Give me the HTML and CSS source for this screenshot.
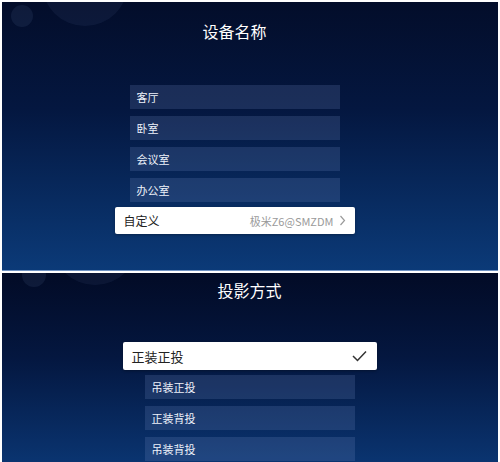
FILE: index.html
```html
<!DOCTYPE html>
<html lang="zh-CN">
<head>
  <meta charset="UTF-8" />
  <meta name="viewport" content="width=device-width, initial-scale=1.0"/>
  <title>设备设置</title>
  <link rel="stylesheet" href="styles.css">
</head>
<body>

  <div class="screen screen-name">
    <h2 class="title">设备名称</h2>
    <div class="list">
      <div class="item">客厅</div>
      <div class="item">卧室</div>
      <div class="item">会议室</div>
      <div class="item">办公室</div>
      <div class="item active">
        <span>自定义</span>
        <span class="value">极米Z6@SMZDM
          <svg class="chevron" width="7" height="11" viewBox="0 0 7 11"><polyline points="1.5,1 5.5,5.5 1.5,10" fill="none" stroke="#9a9a9a" stroke-width="1.2"/></svg>
        </span>
      </div>
    </div>
  </div>

  <div class="divider"></div>

  <div class="screen screen-mode">
    <h2 class="title">投影方式</h2>
    <div class="list">
      <div class="item active">
        <span>正装正投</span>
        <svg class="check" width="15" height="12" viewBox="0 0 15 12"><polyline points="1,6 5.5,10.5 14,1.5" fill="none" stroke="#333" stroke-width="1.5"/></svg>
      </div>
      <div class="item">吊装正投</div>
      <div class="item">正装背投</div>
      <div class="item">吊装背投</div>
    </div>
  </div>

</body>
</html>
```

FILE: styles.css
```css
body {
  margin: 0;
  padding: 2px 2px 0 2px;
  background: #ffffff;
  font-family: "Noto Sans CJK SC", "Noto Sans", sans-serif;
  height: 462px;
  box-sizing: border-box;
  overflow: hidden;
}

.screen {
  position: relative;
  overflow: hidden;
  color: #ffffff;
  background: linear-gradient(to bottom, #030d2a 0%, #041740 40%, #0b3a78 100%);
  box-sizing: border-box;
}

/* faint decorative bubbles in the top-left corner */
.screen::before,
.screen::after {
  content: "";
  position: absolute;
  border-radius: 50%;
  background: rgba(100, 120, 170, 0.13);
}

.screen::before {
  left: 9px;
  top: 3px;
  width: 22px;
  height: 22px;
}

.screen::after {
  left: 40px;
  top: -62px;
  width: 86px;
  height: 86px;
  background: rgba(100, 120, 170, 0.1);
}

.screen-name {
  height: 268px;
  padding: 17px 31px 0 0;
}

.divider {
  height: 1px;
  background: #6f93c4;
  border-bottom: 2px solid #ffffff;
}

.screen-mode {
  height: 189px;
  padding: 5px 1px 0 0;
  background: linear-gradient(to bottom, #020b26 0%, #041740 45%, #0a3470 100%);
}

.screen-mode::before {
  left: 20px;
  top: -10px;
  width: 24px;
  height: 24px;
}

.screen-mode::after {
  left: 50px;
  top: -74px;
  width: 86px;
  height: 86px;
}

.title {
  margin: 0;
  text-align: center;
  font-size: 16px;
  font-weight: normal;
  line-height: 24px;
}

.list {
  display: flex;
  flex-direction: column;
  align-items: center;
  gap: 7px;
}

.screen-name .list {
  margin-top: 42px;
}

.screen-mode .list {
  margin-top: 40px;
}

.item {
  width: 210px;
  height: 24px;
  box-sizing: border-box;
  padding: 0 7px;
  display: flex;
  align-items: center;
  justify-content: space-between;
  background: rgba(120, 145, 200, 0.2);
  font-size: 11px;
  color: #eef2fa;
}

.item.active {
  background: #ffffff;
  color: #222;
  font-size: 13px;
  border-radius: 2px;
  box-shadow: 0 1px 3px rgba(0, 0, 0, 0.3);
}

.screen-name .item.active {
  width: 240px;
  height: 27px;
  padding: 0 9px 0 9px;
  margin-top: -2px;
  font-size: 12px;
}

.screen-mode .item.active {
  width: 254px;
  height: 28px;
  padding: 0 10px 0 9px;
  margin-bottom: -2px;
}

.value {
  display: flex;
  align-items: center;
  gap: 5px;
  font-size: 11px;
  color: #9a9a9a;
}
```
